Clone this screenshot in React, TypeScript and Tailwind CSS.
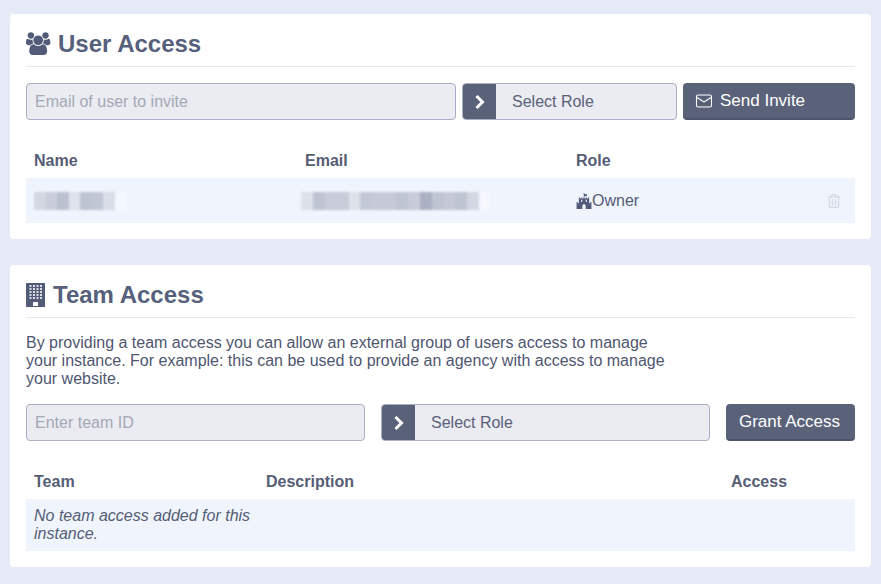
import React from "react";
import { FaFortAwesome, FaRegTrashAlt } from "react-icons/fa";
import { Mail } from "lucide-react";

const nameBlur = ["#d3d7e2", "#c9cdda", "#bcc1d0", "#dfe3ec", "#bfc4d3", "#c2c7d5", "#d9dde7", "#f5f8fe"];
const emailBlur = [
  "#dde1ea", "#bfc4d2", "#c8ccd9", "#c8ccd9", "#dde1ea", "#c3c8d5", "#c6cad7", "#c6cad7",
  "#c0c5d3", "#c8ccd9", "#abb1c2", "#c0c5d3", "#c5c9d6", "#bfc4d2", "#d3d7e2", "#f5f8fe",
];

function UsersIcon() {
  return (
    <svg viewBox="0 0 2048 1792" className="h-[23px] w-[26px] fill-[#525c78]">
      <path d="M593 896q-162 5-265 128h-134q-82 0-138-40.5t-56-118.5q0-353 124-353 6 0 43.5 21t97.5 42.5 119 21.5q67 0 133-23-5 37-5 66 0 139 81 256zm1071 637q0 120-73 189.5t-194 69.5h-874q-121 0-194-69.5t-73-189.5q0-53 3.5-103.5t14-109 26.5-108.5 43-97.5 62-81 85.5-53.5 111.5-20q10 0 43 21.5t73 48 107 48 135 21.5 135-21.5 107-48 73-48 43-21.5q61 0 111.5 20t85.5 53.5 62 81 43 97.5 26.5 108.5 14 109 3.5 103.5zm-1024-1277q0 106-75 181t-181 75-181-75-75-181 75-181 181-75 181 75 75 181zm704 384q0 159-112.5 271.5t-271.5 112.5-271.5-112.5-112.5-271.5 112.5-271.5 271.5-112.5 271.5 112.5 112.5 271.5zm576 225q0 78-56 118.5t-138 40.5h-134q-103-123-265-128 81-117 81-256 0-29-5-66 66 23 133 23 59 0 119-21.5t97.5-42.5 43.5-21q124 0 124 353zm-128-609q0 106-75 181t-181 75-181-75-75-181 75-181 181-75 181 75 75 181z" />
    </svg>
  );
}

function BuildingIcon() {
  const cols = [3.5, 7, 10.5, 14];
  const rows = [2, 5, 8, 11, 14];
  return (
    <svg viewBox="0 0 19 24" className="h-[24px] w-[19px]">
      <rect width="19" height="24" fill="#525c78" />
      {rows.map((y) =>
        cols.map((x) => (
          <rect key={`${x}-${y}`} x={x} y={y} width="2" height="2" fill="#ffffff" opacity="0.8" />
        ))
      )}
      <rect x="7" y="19" width="5" height="4" fill="#ffffff" />
    </svg>
  );
}

function Chevron() {
  return (
    <svg viewBox="0 0 12 16" className="h-[16px] w-[12px]" fill="none" stroke="#ffffff" strokeWidth="3">
      <path d="M2.5 2 8.5 8 2.5 14" />
    </svg>
  );
}

function Blur({ colors, w }: { colors: string[]; w: string }) {
  return (
    <div className={`flex h-[18px] blur-[1px] ${w}`}>
      {colors.map((c, i) => (
        <div key={i} className="flex-1" style={{ backgroundColor: c }} />
      ))}
    </div>
  );
}

function RoleSelect({ className }: { className: string }) {
  return (
    <div className={`flex h-[37px] overflow-hidden rounded-[4px] border border-[#a9afc1] bg-[#eaecf2] ${className}`}>
      <div className="flex w-[33px] items-center justify-center bg-[#5a627a]">
        <Chevron />
      </div>
      <div className="flex flex-1 items-center pl-[16px] text-[16px] text-[#5a6178]">Select Role</div>
    </div>
  );
}

function Input({ placeholder, className }: { placeholder: string; className: string }) {
  return (
    <div className={`flex h-[37px] items-center rounded-[4px] border border-[#a9afc1] bg-[#eaecf2] pl-[8px] text-[16px] text-[#a4a8b5] ${className}`}>
      {placeholder}
    </div>
  );
}

export default function App() {
  return (
    <div className="h-[584px] overflow-hidden bg-[#e6e9f6] px-[10px] pt-[14px] font-['Liberation_Sans',Arial,sans-serif] text-[#565d75]">
      <div className="h-[225px] rounded-[4px] bg-white px-[16px] pt-[12px]">
        <div className="flex h-[41px] items-center gap-[6px] border-b border-[#e6e8ef] pb-[5px]">
          <UsersIcon />
          <h1 className="text-[24px] font-bold text-[#565f7b]">User Access</h1>
        </div>
        <div className="mt-[16px] flex gap-[6px]">
          <Input placeholder="Email of user to invite" className="w-[430px]" />
          <RoleSelect className="w-[215px]" />
          <button className="flex h-[37px] w-[172px] items-center gap-[7px] rounded-[4px] border-b-2 border-[#4e556b] bg-[#5a627a] pl-[12px] text-[17px] text-white">
            <Mail size={18} strokeWidth={1.4} />
            Send Invite
          </button>
        </div>
        <div className="mt-[29px] grid grid-cols-[271px_271px_1fr] px-[8px] pb-[5px] text-[16px] font-bold">
          <div>Name</div>
          <div>Email</div>
          <div>Role</div>
        </div>
        <div className="grid h-[45px] grid-cols-[271px_271px_1fr] items-center bg-[#eff4fd] pl-[8px] pr-[14px]">
          <Blur colors={nameBlur} w="w-[92px]" />
          <div className="-ml-[4px]">
            <Blur colors={emailBlur} w="w-[190px]" />
          </div>
          <div className="flex items-center justify-between">
            <div className="flex items-center text-[16px]">
              <FaFortAwesome size={16} className="text-[#525c78]" />
              Owner
            </div>
            <FaRegTrashAlt size={14} className="text-[#d5d9e2]" />
          </div>
        </div>
      </div>

      <div className="mt-[26px] h-[302px] rounded-[4px] bg-white px-[16px] pt-[12px]">
        <div className="flex h-[41px] items-center gap-[8px] border-b border-[#e6e8ef] pb-[5px]">
          <BuildingIcon />
          <h1 className="text-[24px] font-bold text-[#565f7b]">Team Access</h1>
        </div>
        <p className="mt-[16px] w-[650px] text-[16px] leading-[18px] text-[#4f5670]">
          By providing a team access you can allow an external group of users access to manage your instance. For example: this can be used to provide an agency with access to manage your website.
        </p>
        <div className="mt-[16px] flex gap-[16px]">
          <Input placeholder="Enter team ID" className="w-[339px]" />
          <RoleSelect className="w-[329px]" />
          <button className="h-[37px] w-[129px] rounded-[4px] border-b-2 border-[#4e556b] bg-[#5a627a] pr-[2px] text-[17px] text-white">
            Grant Access
          </button>
        </div>
        <div className="mt-[29px] grid grid-cols-[232px_465px_1fr] px-[8px] pb-[5px] text-[16px] font-bold">
          <div>Team</div>
          <div>Description</div>
          <div>Access</div>
        </div>
        <div className="h-[52px] bg-[#eff4fd] px-[8px] pt-[8px] text-[16px] italic leading-[18px]">
          <div className="w-[232px]">No team access added for this instance.</div>
        </div>
      </div>
    </div>
  );
}
